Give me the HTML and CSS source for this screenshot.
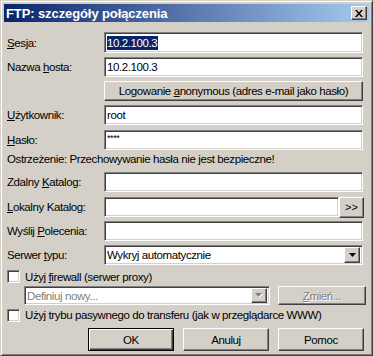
FILE: index.html
```html
<!DOCTYPE html>
<html lang="pl">
<head>
    <meta charset="UTF-8">
    <title>FTP: szczegóły połączenia</title>
    <link rel="stylesheet" href="styles.css">
</head>
<body>

<div class="window">
    <div class="titlebar">
        <span class="title">FTP: szczegóły połączenia</span>
        <span class="close btn">
            <svg width="8" height="7" viewBox="0 0 8 7"><path d="M0 0h2l2 2.5L6 0h2L5 3.5 8 7H6L4 4.5 2 7H0l3-3.5z" fill="#000"/></svg>
        </span>
    </div>

    <div class="body">
        <div class="row first">
            <span class="lbl"><u>S</u>esja:</span>
            <div class="field tall"><span class="selected">10.2.100.3</span></div>
        </div>

        <div class="row">
            <span class="lbl">Nazwa <u>h</u>osta:</span>
            <div class="field">10.2.100.3</div>
        </div>

        <div class="row">
            <span class="lbl"></span>
            <div class="btn wide"><span>Logowanie <u>a</u>nonymous (adres e-mail jako hasło)</span></div>
        </div>

        <div class="row">
            <span class="lbl"><u>U</u>żytkownik:</span>
            <div class="field">root</div>
        </div>

        <div class="row gap5">
            <span class="lbl"><u>H</u>asło:</span>
            <div class="field"><span class="stars">****</span></div>
        </div>

        <div class="warning">Ostrzeżenie: Przechowywanie hasła nie jest bezpieczne!</div>

        <div class="row">
            <span class="lbl">Zdalny <u>K</u>atalog:</span>
            <div class="field"></div>
        </div>

        <div class="row gap5">
            <span class="lbl"><u>L</u>okalny Katalog:</span>
            <div class="field short"></div>
            <div class="btn browse">&gt;&gt;</div>
        </div>

        <div class="row">
            <span class="lbl">Wyślij <u>P</u>olecenia:</span>
            <div class="field"></div>
        </div>

        <div class="row">
            <span class="lbl">Serwer <u>t</u>ypu:</span>
            <div class="field combo">
                <span class="combo-text">Wykryj automatycznie</span>
                <span class="btn arrow">
                    <svg width="7" height="4" viewBox="0 0 7 4"><path d="M0 0h7L3.5 4z" fill="#000"/></svg>
                </span>
            </div>
        </div>

        <div class="check-row fw">
            <span class="checkbox"></span>
            <span>Użyj <u>f</u>irewall (serwer proxy)</span>
        </div>

        <div class="proxy-row">
            <div class="field combo disabled-combo">
                <span class="combo-text">Definiuj nowy...</span>
                <span class="btn arrow">
                    <svg width="8" height="5" viewBox="0 0 8 5"><path d="M1 1h7L4.5 5z" fill="#fff"/><path d="M0 0h7L3.5 4z" fill="#808080"/></svg>
                </span>
            </div>
            <div class="btn change disabled"><span><u>Z</u>mień...</span></div>
        </div>

        <div class="check-row">
            <span class="checkbox"></span>
            <span>Użyj trybu pasywnego do transferu (jak w przeglądarce WWW)</span>
        </div>

        <div class="buttons">
            <div class="btn push default">OK</div>
            <div class="btn push">Anuluj</div>
            <div class="btn push">Pomoc</div>
        </div>
    </div>
</div>

</body>
</html>
```

FILE: styles.css
```css
html, body {
    margin: 0;
    padding: 0;
}

body {
    font-family: "Liberation Sans", Arial, sans-serif;
    font-size: 11.5px;
    letter-spacing: -0.4px;
    color: #000;
    background: #d4d0c8;
}

u {
    text-decoration: underline;
    text-underline-offset: 1px;
}

.window {
    width: 373px;
    height: 356px;
    box-sizing: border-box;
    padding: 3px;
    background: #d4d0c8;
    border: 1px solid;
    border-color: #d4d0c8 #404040 #404040 #d4d0c8;
    box-shadow: inset 1px 1px #fff, inset -1px -1px #808080;
}

/* title bar */
.titlebar {
    height: 18px;
    display: flex;
    align-items: center;
    justify-content: space-between;
    padding: 0 2px 0 2px;
    background: linear-gradient(to right, #0a246a, #a6caf0);
}

.title {
    color: #fff;
    font-weight: bold;
    font-size: 13px;
    letter-spacing: -0.1px;
}

.close {
    width: 16px;
    height: 14px;
}

/* 3d shapes */
.field {
    box-sizing: border-box;
    width: 259px;
    height: 20px;
    background: #fff;
    border: 1px solid;
    border-color: #808080 #fff #fff #808080;
    box-shadow: inset 1px 1px #404040, inset -1px -1px #d4d0c8;
    padding: 0 2px;
    display: flex;
    align-items: center;
    white-space: nowrap;
}

.field.tall {
    height: 21px;
}

.btn {
    box-sizing: border-box;
    background: #d4d0c8;
    border: 1px solid;
    border-color: #fff #404040 #404040 #fff;
    box-shadow: inset -1px -1px #808080, inset 1px 1px #d4d0c8;
    display: flex;
    align-items: center;
    justify-content: center;
    white-space: nowrap;
}

.btn.default {
    border-color: #000;
    box-shadow: inset 1px 1px #fff, inset -1px -1px #404040, inset -2px -2px #808080;
}

.disabled {
    color: #808080;
    text-shadow: 1px 1px #fff;
}

/* form */
.body {
    padding: 10px 0 0 3px;
}

.row {
    display: flex;
    align-items: center;
    height: 20px;
    margin-bottom: 4px;
}

.row.first {
    height: 21px;
}

.row.gap5 {
    margin-top: 5px;
}

.lbl {
    width: 97px;
    flex: none;
}

.selected {
    background: #0a246a;
    color: #fff;
    padding: 0 1px 0 0;
    line-height: 14px;
}

.stars {
    font-size: 9px;
    align-self: flex-start;
    margin-top: 2px;
}

.wide {
    width: 259px;
    height: 20px;
}

.warning {
    height: 18px;
    line-height: 18px;
    margin-top: -4px;
    margin-bottom: 4px;
}

.field.short {
    width: 235px;
}

.browse {
    width: 25px;
    height: 21px;
    font-size: 11px;
    letter-spacing: 0;
}

.combo {
    padding-right: 2px;
    justify-content: space-between;
}

.arrow {
    width: 16px;
    height: 16px;
}

.check-row {
    display: flex;
    align-items: center;
    height: 20px;
    gap: 5px;
}

.check-row.fw {
    height: 19px;
    margin-top: -2px;
}

.checkbox {
    box-sizing: border-box;
    width: 13px;
    height: 13px;
    background: #fff;
    border: 1px solid;
    border-color: #808080 #fff #fff #808080;
    box-shadow: inset 1px 1px #404040, inset -1px -1px #d4d0c8;
}

.proxy-row {
    display: flex;
    align-items: center;
    gap: 8px;
    height: 19px;
    padding-left: 17px;
}

.disabled-combo {
    width: 246px;
    height: 19px;
    color: #808080;
}

.disabled-combo .arrow {
    height: 15px;
}

.change {
    width: 88px;
    height: 19px;
}

.buttons {
    display: flex;
    gap: 9px;
    margin: 3px 0 0 81px;
}

.push {
    width: 86px;
    height: 23px;
}
```
